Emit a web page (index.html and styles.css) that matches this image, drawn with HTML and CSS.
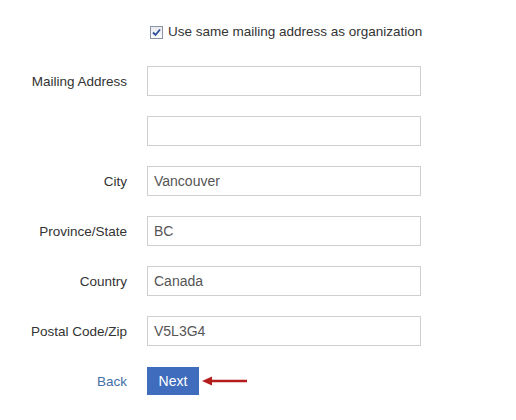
FILE: index.html
```html
<!doctype html><html lang="en">
<head><meta charset="utf-8"/><title>Mailing address</title>
<meta name="viewport" content="width=device-width, initial-scale=1">
<link rel="stylesheet" href="styles.css">
</head>
<body>

<form class="addr">
	<div class="same">
		<label>
			<input type="checkbox" class="chk" checked/>
			<span class="box"><svg width="9" height="9" viewBox="0 0 9 9"><path d="M1 4.5L3.5 7L8 1.5" fill="none" stroke="#2c4f99" stroke-width="1.8"/></svg></span>
			Use same mailing address as organization
		</label>
	</div>

	<div class="rows">
		<label class="lbl" for="mail1">Mailing Address</label>
		<input type="text" id="mail1" class="fld"/>

		<span class="lbl"></span>
		<input type="text" id="mail2" class="fld"/>

		<label class="lbl" for="city">City</label>
		<input type="text" id="city" class="fld" value="Vancouver"/>

		<label class="lbl" for="prov">Province/State</label>
		<input type="text" id="prov" class="fld" value="BC"/>

		<label class="lbl" for="ctry">Country</label>
		<input type="text" id="ctry" class="fld" value="Canada"/>

		<label class="lbl" for="zip">Postal Code/Zip</label>
		<input type="text" id="zip" class="fld" value="V5L3G4"/>

		<a class="lbl back" href="#">Back</a>
		<div class="nav">
			<button type="button" class="next">Next</button>
			<svg class="arrow" width="46" height="10" viewBox="0 0 46 10">
				<path d="M46 5H8" stroke="#b51d1d" stroke-width="2.5"/>
				<path d="M1 5L11 0.5V9.5Z" fill="#b51d1d"/>
			</svg>
		</div>
	</div>
</form>

</body></html>
```

FILE: styles.css
```css
html, body {margin: 0; background: #fff;}

body {
	font-family: "Liberation Sans", Arial, sans-serif;
	font-size: 13px;
	color: #333;
}

.addr {padding-top: 23px;}

/* チェックボックス行 */
.same {padding-left: 150px; height: 18px; line-height: 18px;}
.same label {display: flex; align-items: center; gap: 4px; font-size: 13.5px; color: #333;}
.chk {display: none;}
.box {
	box-sizing: border-box;
	width: 13px;
	height: 13px;
	border: 1px solid #8a94a6;
	background: linear-gradient(#e8eaef, #fdfdfd);
	display: flex;
	align-items: center;
	justify-content: center;
	margin-right: 1px;
}
.chk:not(:checked) + .box svg {visibility: hidden;}

.rows {
	display: grid;
	grid-template-columns: 127px 274px;
	column-gap: 20px;
	row-gap: 20px;
	margin-top: 25px;
}

.lbl {
	text-align: right;
	align-self: center;
	font-size: 13.5px;
	color: #333;
}

.fld {
	box-sizing: border-box;
	height: 30px;
	width: 274px;
	margin: 0;
	padding: 0 6px;
	border: 1px solid #cfcfcf;
	border-radius: 0;
	font-family: "Liberation Sans", Arial, sans-serif;
	font-size: 14px;
	color: #555;
	outline: none;
}

.back {color: #3f6fa6; text-decoration: none; margin-top: 1px;}

.nav {display: flex; align-items: center; gap: 2px;}

.next {
	width: 52px;
	height: 28px;
	margin-top: 1px;
	border: 0;
	border-radius: 0;
	background: #3f6cbd;
	color: #fff;
	font-family: "Liberation Sans", Arial, sans-serif;
	font-size: 14px;
	cursor: pointer;
}
```
